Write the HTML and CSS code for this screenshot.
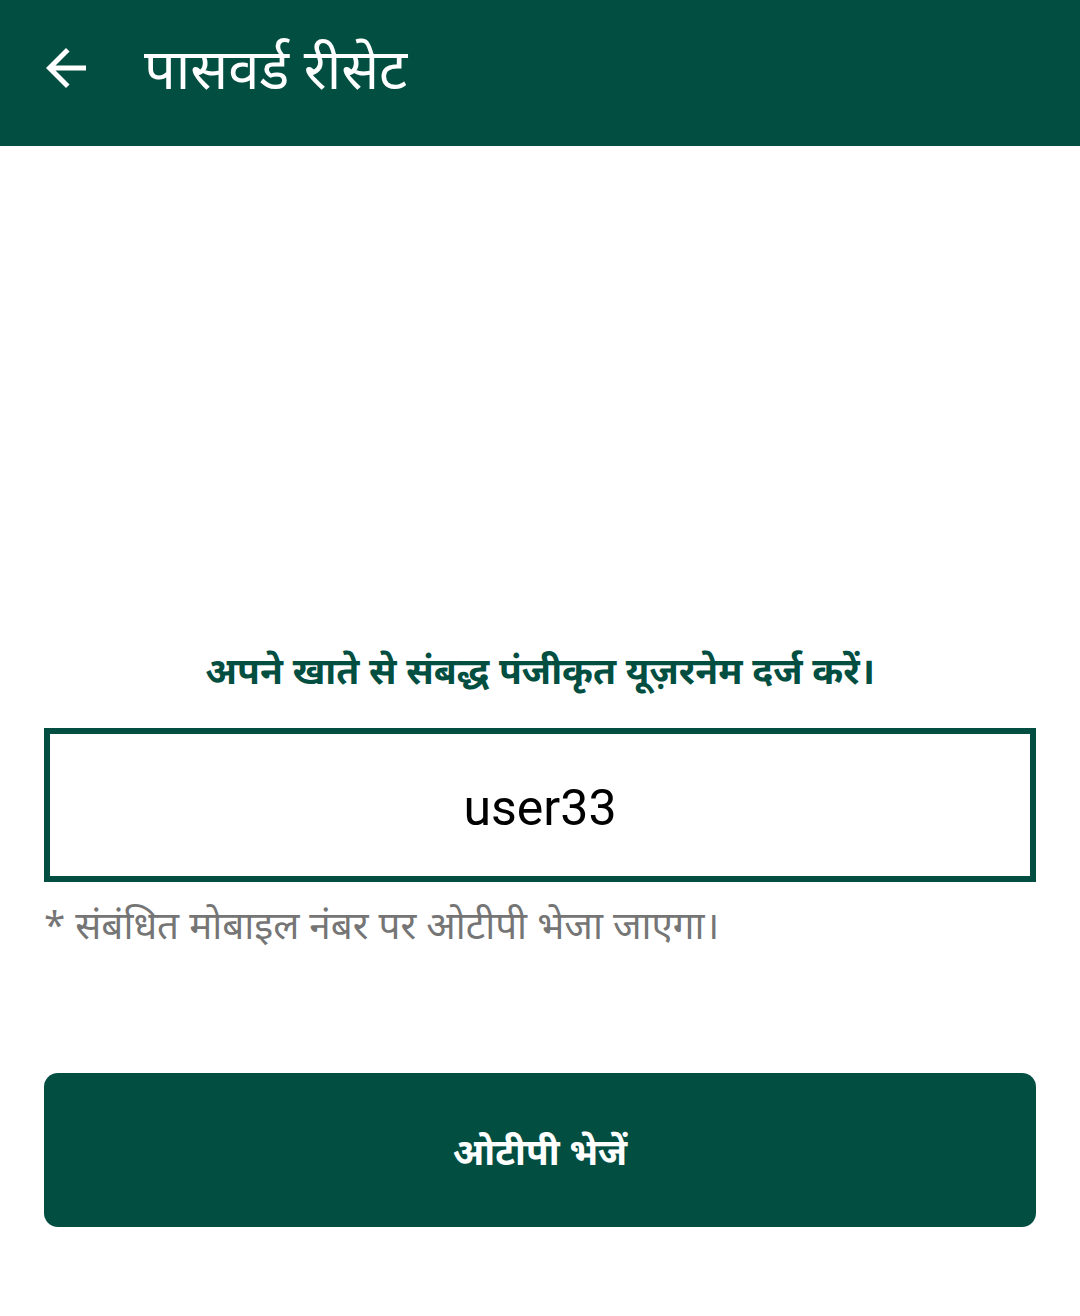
FILE: index.html
```html
<!DOCTYPE html>
<html lang="hi">
<head>
<meta charset="utf-8">
<link rel="stylesheet" href="styles.css">
</head>
<body>
<header class="appbar">
  <svg class="back" viewBox="0 0 24 24" width="60" height="60"><path d="M20 11H7.83l5.59-5.59L12 4l-8 8 8 8 1.41-1.41L7.83 13H20v-2z" fill="#fff"/></svg>
  <h1 class="title">पासवर्ड रीसेट</h1>
</header>
<main class="content">
  <p class="prompt">अपने खाते से संबद्ध पंजीकृत यूज़रनेम दर्ज करें।</p>
  <div class="field">user33</div>
  <p class="hint">* संबंधित मोबाइल नंबर पर ओटीपी भेजा जाएगा।</p>
  <button class="btn">ओटीपी भेजें</button>
</main>
</body>
</html>
```

FILE: styles.css
```css
html, body { margin: 0; padding: 0; background: #fff; }
body { font-family: "Noto Sans", "Noto Sans Devanagari", Roboto, sans-serif; width: 1080px; height: 1316px; }
.appbar { height: 146px; background: #024f42; display: flex; align-items: center; padding-left: 36px; box-sizing: border-box; }
.back { display: block; margin-top: -10px; }
.title { margin: -12px 0 0 48px; color: #fff; font-weight: 400; font-size: 56px; line-height: 1; }
.content { padding: 0 44px; display: flex; flex-direction: column; }
.prompt { margin: 500px 0 0; text-align: center; color: #024f42; font-weight: 700; font-size: 37.3px; line-height: 48px; }
.field { margin-top: 34px; height: 154px; box-sizing: border-box; border: 6px solid #024f42; display: flex; align-items: center; justify-content: center; padding-top: 6px; font-family: Roboto, sans-serif; font-size: 50px; color: #000; }
.hint { margin: 16px 0 0; color: #757575; font-size: 38.6px; line-height: 52px; }
.btn { margin-top: 123px; height: 154px; border: none; border-radius: 14px; background: #024f42; color: #fff; font-family: inherit; font-weight: 700; font-size: 37px; }
```
